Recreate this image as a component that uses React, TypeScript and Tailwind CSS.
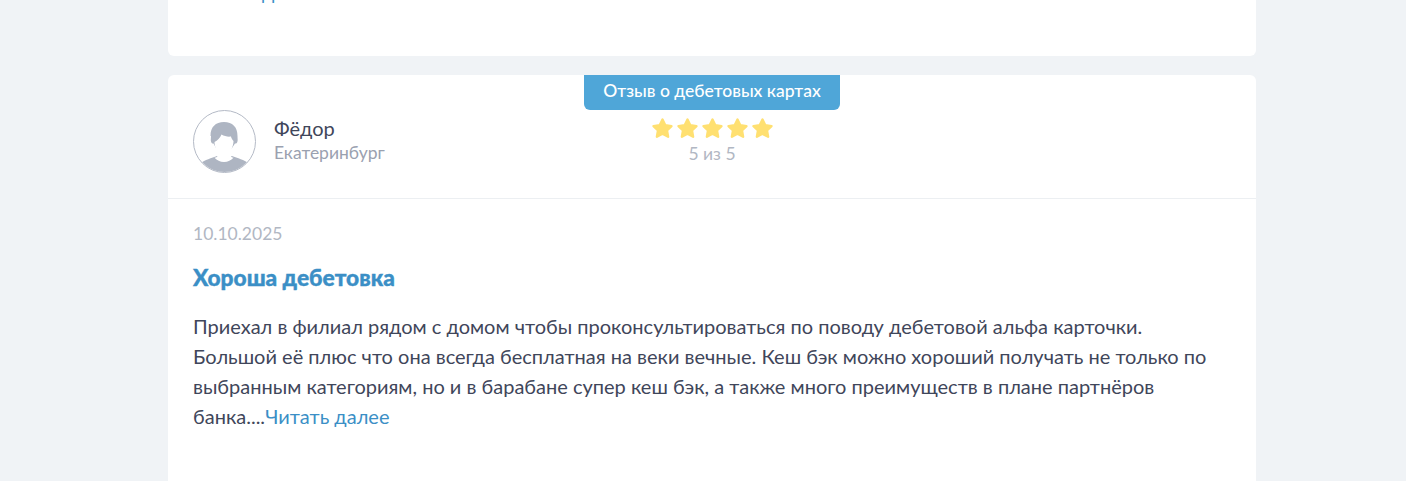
import React from 'react';

const Star = () => (
  <svg viewBox="0 0 25 25" className="w-[25px] h-[25px] shrink-0" fill="#ffe071" stroke="#ffe071" strokeWidth="2.4" strokeLinejoin="round">
    <path d="M12.500 3.500l2.800 5.700 6.200.9-4.500 4.400 1.100 6.200-5.600-2.900-5.600 2.900 1.100-6.200-4.500-4.400 6.200-.9z" />
  </svg>
);

const Avatar = () => (
  <div className="w-[63px] h-[63px] shrink-0 rounded-full border border-[#b4bac6] overflow-hidden">
    <svg viewBox="0 0 61 61" className="w-full h-full">
      <path d="M7 52c3-3 11-5 16-7h15c5 2 13 4 16 7v9H7z" fill="#aeb5c2" />
      <path d="M16.500 25c0-9 5-14 13.500-14s13.500 5 13.500 14c0 3 .5 4-.2 6-.4 1.300-1.500 1.700-2.300 1.500L38 37l-8 5-8-5-2.500-4.500c-.8.2-1.900-.2-2.300-1.500-.7-2-.2-3-.2-6z" fill="#aeb5c2" />
      <path d="M20.500 31c3-1.500 5.500-4 7-7.500 3 1.800 6.500 2.500 9.500 2 .3 1.500 1.200 3 2.500 4.500 0 5-3 13.500-9.500 14-6.500-.5-9.500-7.500-9.500-13z" fill="#fff" />
      <path d="M24 38h12l1 7c.5 1 1 1.500 2.500 1.800C37 49.500 34 51 30 51s-7-1.500-9.500-4.200C22 46.500 23 46 23.500 45z" fill="#fff" />
    </svg>
  </div>
);

export default function App() {
  return (
    <div className="h-[481px] overflow-hidden bg-[#f0f3f6] font-['Lato','Liberation_Sans',sans-serif] text-[20px] leading-[30px] text-[#3f465a]">
      <div className="w-[1088px] ml-[168px]">
        <div className="h-[56px] bg-white rounded-b-[6px] overflow-hidden">
          <div className="-mt-[23px] pl-[25px] text-[#3b8fc6]">Читать далее</div>
        </div>

        <div className="relative mt-[19px] h-[420px] bg-white rounded-[6px]">
          <div className="absolute left-1/2 top-0 -translate-x-1/2 w-[256px] h-[35px] bg-[#4fa6d8] rounded-b-[6px] text-white text-[17.5px] leading-[31px] font-medium text-center">
            Отзыв о дебетовых картах
          </div>

          <div className="h-[124px] border-b border-[#eceff2] pl-[25px] pt-[35px] flex items-start">
            <Avatar />
            <div className="ml-[18px] mt-[3px]">
              <div className="leading-[31px]">Фёдор</div>
              <div className="text-[17.5px] leading-[18px] text-[#9aa1b0]">Екатеринбург</div>
            </div>
            <div className="absolute left-0 right-0 top-[41px] flex flex-col items-center">
              <div className="flex">
                <Star /><Star /><Star /><Star /><Star />
              </div>
              <div className="mt-[1px] text-[17.5px] leading-[24px] text-[#b1b7c3]">5 из 5</div>
            </div>
          </div>

          <div className="px-[25px] pt-[20px]">
            <div className="text-[17.5px] text-[#b1b7c3]">10.10.2025</div>
            <div className="mt-[14px] text-[22.7px] leading-[30px] font-black [-webkit-text-stroke:0.4px_#3b8fc6] text-[#3b8fc6]">Хороша дебетовка</div>
            <p className="mt-[18px]">
              Приехал в филиал рядом с домом чтобы проконсультироваться по поводу дебетовой альфа карточки. Большой её плюс что она всегда бесплатная на веки вечные. Кеш бэк можно хороший получать не только по выбранным категориям, но и в барабане супер кеш бэк, а также много преимуществ в плане партнёров банка....<span className="ml-[0.2px] text-[#3b8fc6]">Читать далее</span>
            </p>
          </div>
        </div>
      </div>
    </div>
  );
}
